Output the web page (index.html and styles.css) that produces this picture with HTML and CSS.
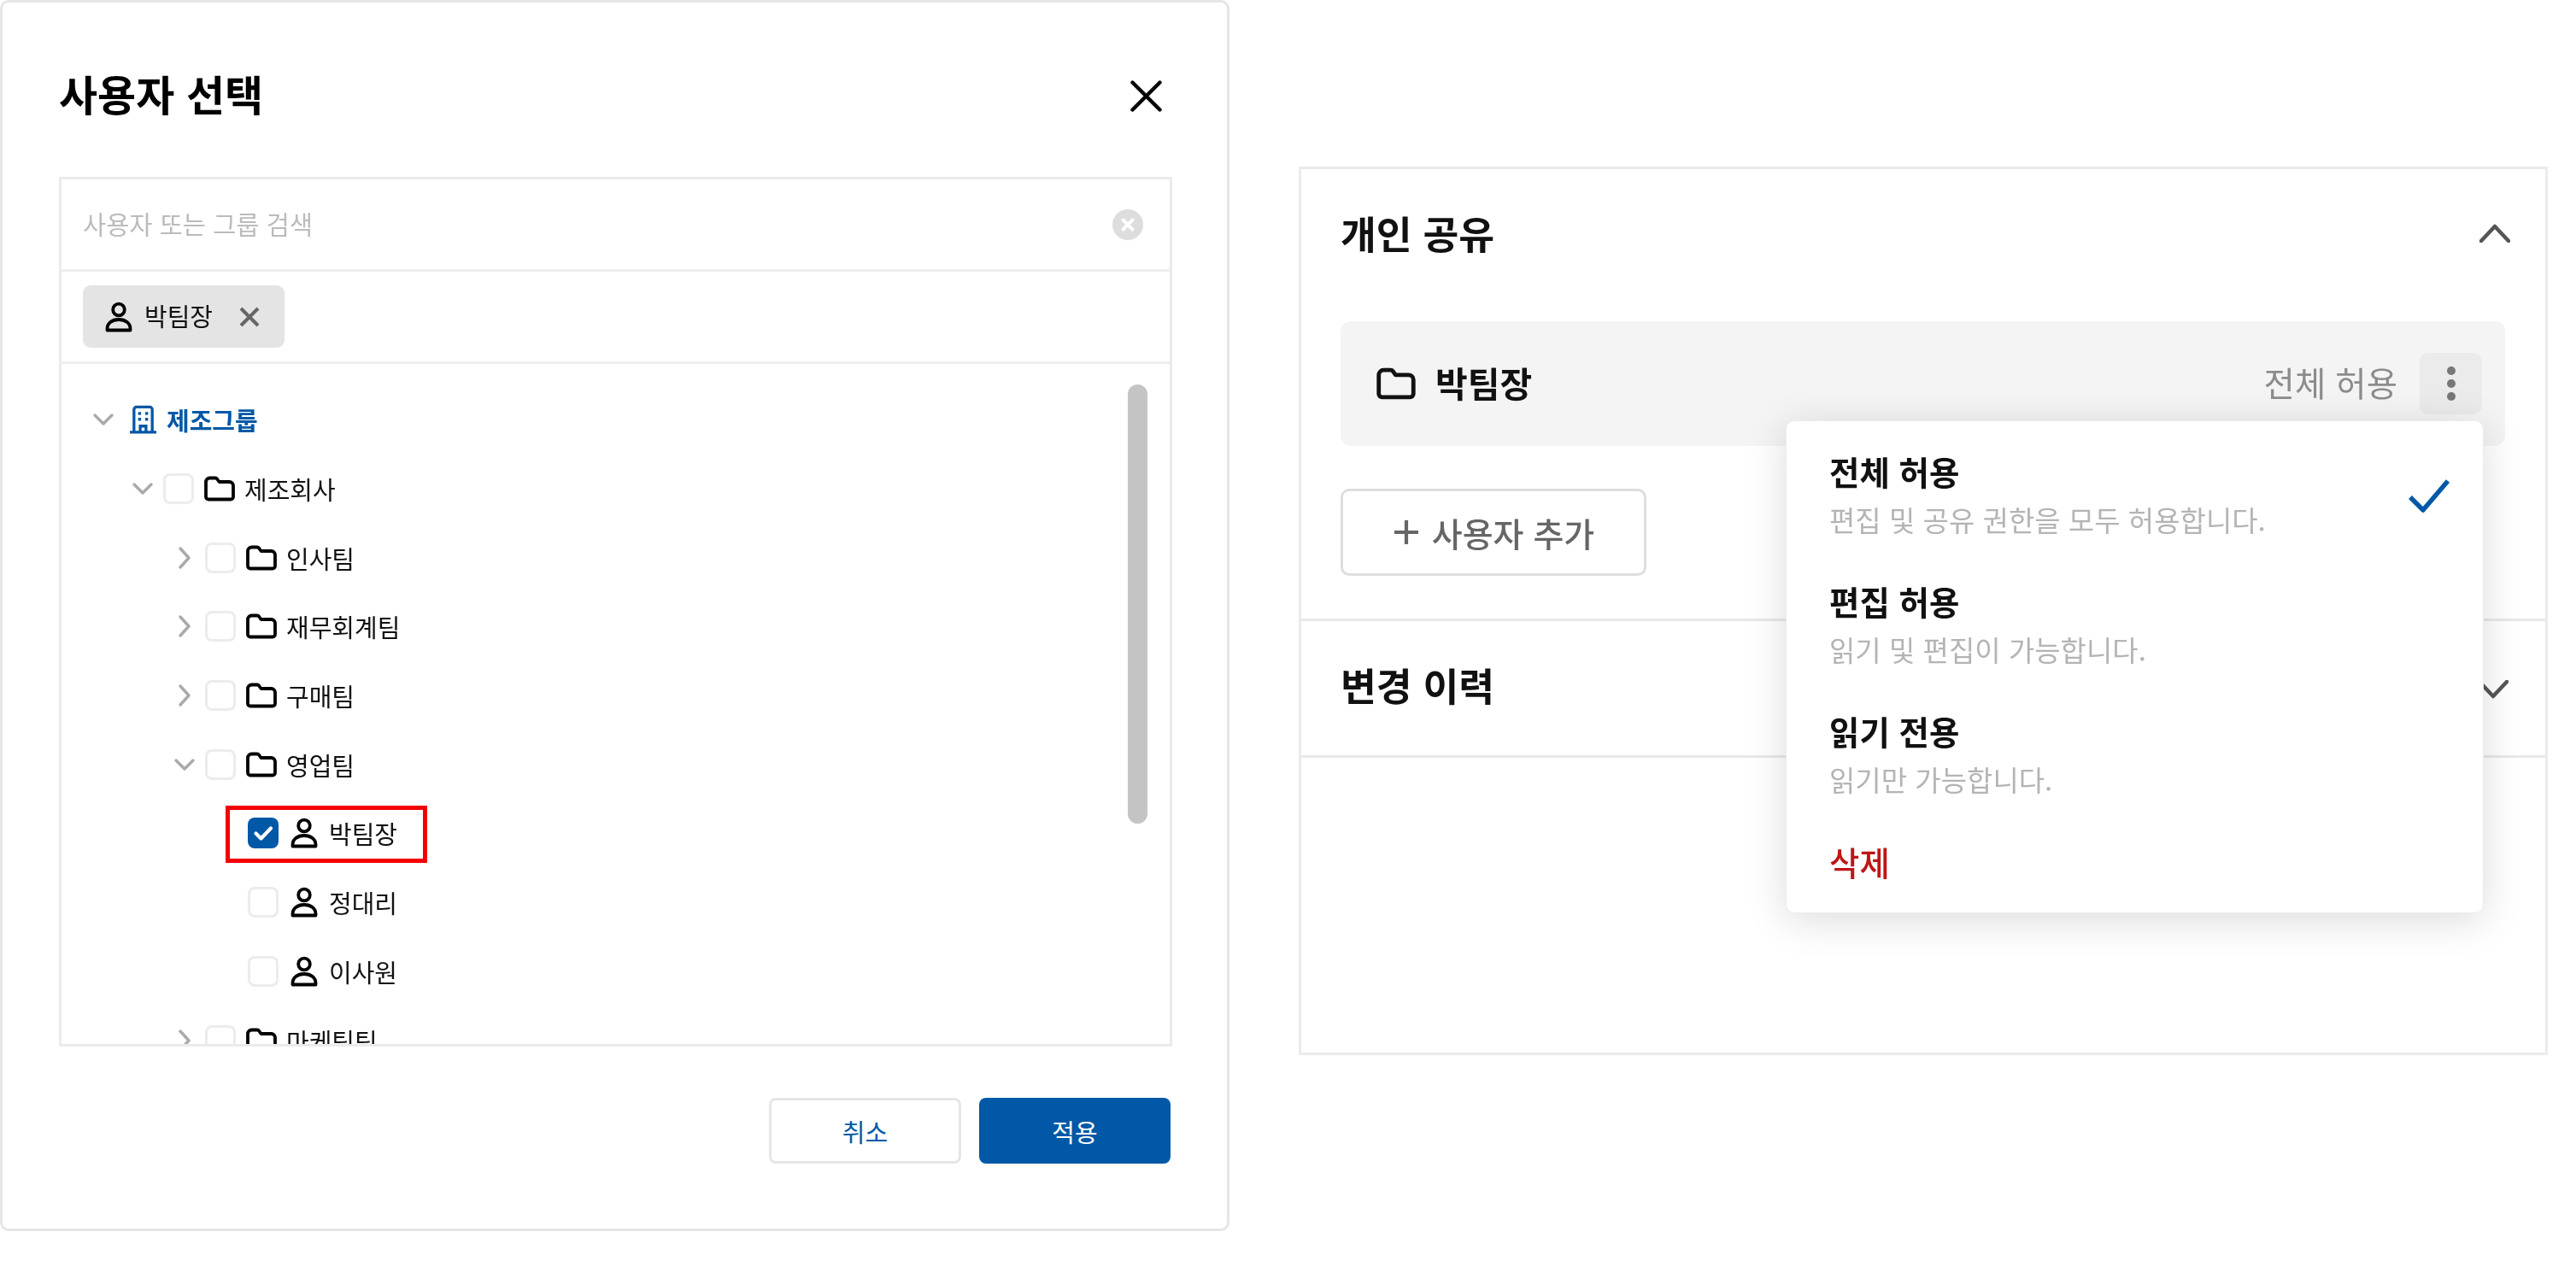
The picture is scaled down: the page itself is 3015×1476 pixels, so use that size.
FILE: index.html
```html
<!DOCTYPE html>
<html lang="ko">
<head>
<meta charset="utf-8">
<title>사용자 선택</title>
<link rel="stylesheet" href="styles.css">
</head>
<body>
<svg class="defs" width="0" height="0" aria-hidden="true">
  <symbol id="folder" viewBox="0 0 36 30"><path d="M2 7a4.500 4.500 0 0 1 4.500-4.500h6.500a2.500 2.500 0 0 1 2 1l2.500 3.500h12a4.500 4.500 0 0 1 4.500 4.500v13a3 3 0 0 1-3 3H5a3 3 0 0 1-3-3z" fill="none" stroke="currentColor" stroke-width="3.800" stroke-linejoin="round"/></symbol>
  <symbol id="person" viewBox="0 0 36 36"><g fill="none" stroke="currentColor" stroke-width="3.800" stroke-linejoin="round"><circle cx="18" cy="9.500" r="6.800"/><path d="M4.500 33.500v-1.500c0-6.500 5.500-11 13.500-11s13.500 4.500 13.500 11v1.500z"/></g></symbol>
  <symbol id="chev-down" viewBox="0 0 30 30"><path d="M5 10l10 10 10-10" fill="none" stroke="currentColor" stroke-width="3.400" stroke-linecap="round" stroke-linejoin="round"/></symbol>
  <symbol id="chev-right" viewBox="0 0 30 30"><path d="M10 4l10 11-10 11" fill="none" stroke="currentColor" stroke-width="3.400" stroke-linecap="round" stroke-linejoin="round"/></symbol>
</svg>
<main class="stage">
  <section class="dialog">
    <header class="dialog-head">
      <h1 class="dialog-title">사용자 선택</h1>
      <svg class="close-icon" viewBox="0 0 37 37"><path d="M2.500 2.500l32 32M34.500 2.500l-32 32" fill="none" stroke="currentColor" stroke-width="4.400" stroke-linecap="round"/></svg>
    </header>
    <div class="picker">
      <div class="search-row">
        <span class="placeholder">사용자 또는 그룹 검색</span>
        <svg class="clear-icon" viewBox="0 0 36 36"><circle cx="18" cy="18" r="18" fill="#dddddd"/><path d="M12.500 12.500l11 11M23.500 12.500l-11 11" stroke="#fff" stroke-width="4" stroke-linecap="round"/></svg>
      </div>
      <div class="chip-row">
        <span class="chip">
          <svg class="ic-person"><use href="#person"/></svg>
          <span class="chip-text">박팀장</span>
          <svg class="chip-x" viewBox="0 0 24 24"><path d="M2 2l20 20M22 2L2 22" fill="none" stroke="currentColor" stroke-width="4"/></svg>
        </span>
      </div>
      <div class="tree">
        <div class="row lv0">
          <svg class="chev"><use href="#chev-down"/></svg>
          <svg class="building" viewBox="0 0 34 34"><g fill="none" stroke="currentColor" stroke-width="3.400"><path d="M6 32V5a3 3 0 0 1 3-3h16a3 3 0 0 1 3 3v27"/><path d="M1 32.300h32"/><path d="M13.500 32v-7h7v7"/></g><g fill="currentColor"><rect x="11" y="8" width="3.500" height="3.500"/><rect x="19.500" y="8" width="3.500" height="3.500"/><rect x="11" y="15" width="3.500" height="3.500"/><rect x="19.500" y="15" width="3.500" height="3.500"/></g></svg>
          <span class="org-name">제조그룹</span>
        </div>
        <div class="row lv1">
          <svg class="chev"><use href="#chev-down"/></svg>
          <span class="box"></span><svg class="ic"><use href="#folder"/></svg><span class="name">제조회사</span>
        </div>
        <div class="row lv2">
          <svg class="chev"><use href="#chev-right"/></svg>
          <span class="box"></span><svg class="ic"><use href="#folder"/></svg><span class="name">인사팀</span>
        </div>
        <div class="row lv2">
          <svg class="chev"><use href="#chev-right"/></svg>
          <span class="box"></span><svg class="ic"><use href="#folder"/></svg><span class="name">재무회계팀</span>
        </div>
        <div class="row lv2">
          <svg class="chev"><use href="#chev-right"/></svg>
          <span class="box"></span><svg class="ic"><use href="#folder"/></svg><span class="name">구매팀</span>
        </div>
        <div class="row lv2">
          <svg class="chev"><use href="#chev-down"/></svg>
          <span class="box"></span><svg class="ic"><use href="#folder"/></svg><span class="name">영업팀</span>
        </div>
        <div class="row lv3">
          <span class="chev"></span>
          <span class="box on"><svg viewBox="0 0 36 36"><path d="M9.500 18.500l6 6 11.500-12" fill="none" stroke="#fff" stroke-width="4.200" stroke-linecap="round" stroke-linejoin="round"/></svg></span><svg class="ic"><use href="#person"/></svg><span class="name">박팀장</span>
          <span class="highlight"></span>
        </div>
        <div class="row lv3">
          <span class="chev"></span>
          <span class="box"></span><svg class="ic"><use href="#person"/></svg><span class="name">정대리</span>
        </div>
        <div class="row lv3">
          <span class="chev"></span>
          <span class="box"></span><svg class="ic"><use href="#person"/></svg><span class="name">이사원</span>
        </div>
        <div class="row lv2">
          <svg class="chev"><use href="#chev-right"/></svg>
          <span class="box"></span><svg class="ic"><use href="#folder"/></svg><span class="name">마케팅팀</span>
        </div>
        <span class="scroll-thumb"></span>
      </div>
    </div>
    <footer class="dialog-foot">
      <button class="btn btn-line">취소</button>
      <button class="btn btn-fill">적용</button>
    </footer>
  </section>

  <section class="panel">
    <div class="sec sec-share">
      <div class="sec-head">
        <h2 class="sec-title">개인 공유</h2>
        <svg class="sec-chev" viewBox="0 0 36 22"><path d="M2 20L18 3l16 17" fill="none" stroke="currentColor" stroke-width="4.500" stroke-linecap="round" stroke-linejoin="round"/></svg>
      </div>
      <div class="share-row">
        <svg class="share-folder"><use href="#folder"/></svg>
        <span class="share-name">박팀장</span>
        <span class="share-perm">전체 허용</span>
        <span class="kebab"><i></i><i></i><i></i></span>
      </div>
      <button class="add-btn">
        <svg class="plus" viewBox="0 0 30 30"><path d="M15 0v30M0 15h30" stroke="currentColor" stroke-width="4.500"/></svg>
        <span>사용자 추가</span>
      </button>
    </div>
    <div class="sec sec-history">
      <div class="sec-head hist-head">
        <h2 class="sec-title">변경 이력</h2>
        <svg class="sec-chev hist-chev" viewBox="0 0 36 22"><path d="M2 2l16 17L34 2" fill="none" stroke="currentColor" stroke-width="4.500" stroke-linecap="round" stroke-linejoin="round"/></svg>
      </div>
    </div>
    <div class="menu">
      <div class="opt">
        <div class="opt-text"><div class="opt-title">전체 허용</div><div class="opt-desc">편집 및 공유 권한을 모두 허용합니다.</div></div>
        <svg class="opt-check" viewBox="0 0 50 40"><path d="M3 22l15 15L47 3" fill="none" stroke="currentColor" stroke-width="5.500" stroke-linejoin="round"/></svg>
      </div>
      <div class="opt">
        <div class="opt-text"><div class="opt-title">편집 허용</div><div class="opt-desc">읽기 및 편집이 가능합니다.</div></div>
      </div>
      <div class="opt">
        <div class="opt-text"><div class="opt-title">읽기 전용</div><div class="opt-desc">읽기만 가능합니다.</div></div>
      </div>
      <div class="opt-del">삭제</div>
    </div>
  </section>
</main>
</body>
</html>
```
FILE: styles.css
```css
* { box-sizing: border-box; }
html, body { margin: 0; background: #fff; }
body { font-family: "Noto Sans CJK KR", "Noto Sans", sans-serif; color: #111; }
.defs { position: absolute; }
.stage { display: flex; align-items: flex-start; width: 3015px; height: 1476px; overflow: hidden; filter: blur(.6px); }

/* dialog */
.dialog { width: 1439px; height: 1441px; flex: none; border: 3px solid #e6e6e6; border-radius: 10px; padding: 0 64px 0 66px; }
.dialog-head { height: 204px; padding-top: 12px; display: flex; align-items: center; justify-content: space-between; }
.dialog-title { margin: 0 0 4px; font-size: 49px; font-weight: 700; line-height: 60px; color: #000; }
.close-icon { width: 37px; height: 37px; margin: 3px 12px 0 0; color: #000; }

.picker { height: 1018px; border: 3px solid #ebebeb; display: flex; flex-direction: column; }
.search-row { height: 108px; flex: none; border-bottom: 3px solid #eeeeee; padding: 0 31px 0 26px; display: flex; align-items: center; justify-content: space-between; }
.placeholder { font-size: 29.500px; line-height: 40px; margin-bottom: 3px; margin-left: -1px; color: #bbbbbb; }
.clear-icon { width: 36px; height: 36px; }
.chip-row { height: 108px; flex: none; border-bottom: 3px solid #eeeeee; padding: 16px 0 0 25px; }
.chip { width: 236px; height: 73px; background: #e4e4e4; border-radius: 9px; display: flex; align-items: center; padding-left: 24px; }
.ic-person { width: 36px; height: 36px; color: #000; flex: none; }
.chip-text { font-size: 29px; line-height: 36px; margin: 0 0 3px 12px; color: #111; }
.chip-x { width: 24px; height: 24px; margin-left: 31px; color: #666; }

.tree { flex: 1; min-height: 0; overflow: hidden; position: relative; padding-top: 25px; }
.row { height: 80.700px; display: flex; align-items: center; position: relative; }
.lv0 { padding-left: 34px; }
.lv1 { padding-left: 80px; }
.lv2 { padding-left: 129px; }
.lv3 { padding-left: 179px; }
.chev { width: 30px; height: 30px; flex: none; color: #aaaaaa; margin-right: 9px; }
.box { width: 36px; height: 36px; flex: none; border: 3px solid #ececec; border-radius: 8px; background: #fff; }
.box.on { background: #0058a6; border-color: #0058a6; border-width: 0; }
.box.on svg { display: block; width: 36px; height: 36px; }
.ic { width: 36px; height: 36px; flex: none; margin: 0 11px 0 12px; color: #000; }
.name { font-size: 29px; line-height: 40px; color: #111; white-space: nowrap; }
.building { width: 33px; height: 34px; flex: none; margin: 0 11px 0 6px; color: #0058a6; }
.org-name { font-size: 29px; font-weight: 700; line-height: 40px; color: #0058a6; }
.highlight { position: absolute; left: 192px; top: 8px; width: 236px; height: 67px; border: 5px solid #f40000; }
.scroll-thumb { position: absolute; right: 26px; top: 24px; width: 23px; height: 514px; border-radius: 12px; background: #c4c4c4; }

.dialog-foot { display: flex; justify-content: flex-end; gap: 21px; margin-top: 60px; padding-right: 2px; }
.btn { width: 225px; height: 77px; border-radius: 8px; font: 400 29px/40px "Noto Sans CJK KR", sans-serif; padding: 0; }
.btn-line { background: #fff; border: 3px solid #e6e6e6; color: #0058a6; }
.btn-fill { background: #0058a6; border: 0; color: #fff; width: 224px; }

/* panel */
.panel { width: 1462px; height: 1040px; flex: none; margin: 195px 0 0 81px; border: 3px solid #ebebeb; position: relative; }
.sec { border-bottom: 3px solid #e8e8e8; }
.sec-share { padding: 0 47px 50px 46px; }
.sec-head { height: 150px; display: flex; align-items: center; justify-content: space-between; margin-bottom: 28px; }
.sec-title { margin: 0 0 3px; font-size: 45.500px; font-weight: 700; line-height: 60px; color: #111; }
.sec-chev { width: 36px; height: 22px; margin-right: -6px; color: #555; flex: none; }
.sec-history { padding: 0 47px 0 46px; }
.hist-head { height: 157px; margin-bottom: 0; padding-bottom: 6px; }
.hist-chev { margin: 8px -4px 0 0; }

.share-row { height: 146px; background: #f4f4f4; border-radius: 12px; display: flex; align-items: center; padding: 0 27px 0 42px; }
.share-folder { width: 46px; height: 38px; flex: none; color: #111; }
.share-name { font-size: 41px; font-weight: 700; line-height: 50px; margin: 0 0 5px 23px; flex: 1; }
.share-perm { font-size: 39.500px; line-height: 50px; margin-bottom: 5px; color: #8c8c8c; }
.kebab { width: 73px; height: 72px; margin-left: 26px; background: #ebebeb; border-radius: 10px; display: flex; flex-direction: column; align-items: center; justify-content: center; gap: 5px; }
.kebab i { width: 10px; height: 10px; border-radius: 50%; background: #777; }
.add-btn { width: 358px; height: 102px; margin-top: 50px; background: #fff; border: 3px solid #dedede; border-radius: 10px; display: flex; align-items: center; justify-content: center; gap: 16px; padding: 0 0 0 2px; font: 500 39px/50px "Noto Sans CJK KR", sans-serif; color: #666; }
.plus { width: 28px; height: 28px; }

.menu { position: absolute; left: 567px; top: 294px; width: 817px; height: 577px; background: #fff; border-radius: 10px; border: 1px solid #ececec; box-shadow: 0 8px 48px rgba(0,0,0,.14); padding: 31px 38px 0 50px; }
.opt { height: 152px; padding-bottom: 40px; display: flex; align-items: center; justify-content: space-between; }
.opt-title { font-size: 38.500px; font-weight: 700; line-height: 54px; margin-bottom: 2px; color: #111; }
.opt-desc { font-size: 33px; line-height: 56px; color: #b4b4b4; }
.opt-check { width: 50px; height: 40px; color: #0058a6; flex: none; }
.opt-del { font-size: 38.500px; font-weight: 500; line-height: 56px; color: #bf1616; }
```
